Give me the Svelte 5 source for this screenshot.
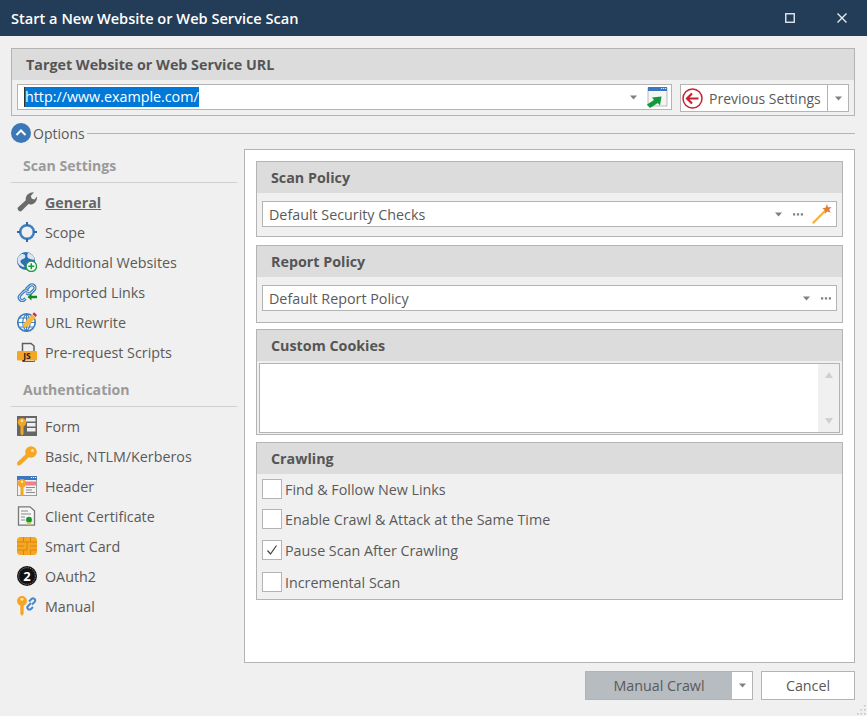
<script>
  const scan = [
    { id: 'wrench', label: 'General', active: true },
    { id: 'scope', label: 'Scope' },
    { id: 'globeplus', label: 'Additional Websites' },
    { id: 'links', label: 'Imported Links' },
    { id: 'rewrite', label: 'URL Rewrite' },
    { id: 'js', label: 'Pre-request Scripts' }
  ];
  const auth = [
    { id: 'form', label: 'Form' },
    { id: 'key', label: 'Basic, NTLM/Kerberos' },
    { id: 'header', label: 'Header' },
    { id: 'cert', label: 'Client Certificate' },
    { id: 'card', label: 'Smart Card' },
    { id: 'oauth', label: 'OAuth2' },
    { id: 'manual', label: 'Manual' }
  ];
  const checks = [
    { label: 'Find & Follow New Links', on: false },
    { label: 'Enable Crawl & Attack at the Same Time', on: false },
    { label: 'Pause Scan After Crawling', on: true },
    { label: 'Incremental Scan', on: false }
  ];
</script>

{#snippet caret()}
  <svg class="caret" width="7" height="5" viewBox="0 0 7 5"><path d="M0 .5h7L3.500 4.500z" fill="#808080"/></svg>
{/snippet}
{#snippet dots()}
  <svg class="dots" width="10" height="3" viewBox="0 0 10 3"><path d="M0 .3h2.200v2.200H0zM3.900 .3h2.200v2.200H3.900zM7.800 .3H10v2.200H7.800z" fill="#808080"/></svg>
{/snippet}
{#snippet smallKey(x, y)}
  <g transform="translate({x} {y})">
    <circle cx="4.500" cy="4.200" r="4.200" fill="#f5a623"/>
    <circle cx="4.500" cy="2.800" r="1.200" fill="#fde9c0"/>
    <path d="M3 7.500h3v8.500L4.500 17.500 3 16z" fill="#f5a623"/>
  </g>
{/snippet}
{#snippet icon(id)}
  <svg class="ico" width="20" height="20" viewBox="0 0 20 20">
    {#if id === 'wrench'}
      <path d="M.9 15.500 8.800 8.200C8.200 4 11.500.2 17 .3L13.800 4l1 2.700 2.700.9L20 4.600c.5 5.200-4 9-8.500 7.500L4.500 19C2.800 20.500-.5 17.300.9 15.500z" fill="#6b6b6b"/>
    {:else if id === 'scope'}
      <circle cx="10" cy="10" r="6.800" fill="none" stroke="#3f7fbe" stroke-width="2.500"/>
      <path d="M10 0v4M10 16v4M0 10h4M16 10h4" stroke="#2f6aa6" stroke-width="2"/>
    {:else if id === 'globeplus'}
      <circle cx="9" cy="9" r="9" fill="#2f70b2"/>
      <path d="M4.500 2c3-.5 4.500 1.500 3.500 3.500S3.500 7 3.500 9.500 7 12 7.500 15C4 15 1 12.500.5 9S2.500 3 4.500 2zM11 1c3.500.5 6 3 6.500 6.500-2 1-4-1-5.500-1S9.500 3 11 1z" fill="#dbe6f1"/>
      <circle cx="14.300" cy="14.300" r="5.200" fill="#fff" stroke="#1d9a3e" stroke-width="1.300"/>
      <path d="M14.300 11.300v6M11.300 14.300h6" stroke="#1d9a3e" stroke-width="1.600"/>
    {:else if id === 'links'}
      <g fill="none" stroke="#3f7fbe" stroke-width="3.200">
        <path d="M9 7.500 12.800 3.700a3 3 0 0 1 4.300 4.200L14 11a3 3 0 0 1-4.200 0"/>
        <path d="M11 9.500a3 3 0 0 0-4.200 0l-4 4.200a3 3 0 0 0 4.200 4.200l1.500-1.500"/>
      </g>
      <g fill="none" stroke="#cfe2f5" stroke-width="1">
        <path d="M9 7.500 12.800 3.700a3 3 0 0 1 4.300 4.200L14 11a3 3 0 0 1-4.200 0"/>
        <path d="M11 9.500a3 3 0 0 0-4.200 0l-4 4.200a3 3 0 0 0 4.200 4.200l1.500-1.500"/>
      </g>
      <path d="M10.500 15 14.500 11.500v2.300H20v2.500h-5.500v2.300z" fill="#128a1e"/>
    {:else if id === 'rewrite'}
      <circle cx="9.500" cy="10.500" r="8.700" fill="#fff" stroke="#3f7fbe" stroke-width="1.700"/>
      <path d="M1 10.500h17M9.500 2v17M3 6h13M3 15h13M9.500 2c-5 4-5 13 0 17M9.500 2c5 4 5 13 0 17" fill="none" stroke="#3f7fbe" stroke-width="1.100"/>
      <path d="M7 11 15 2.500l3.600 3.300-8 8.700-4.300 1.200z" fill="#f6b73c"/>
      <path d="M15.500 2 17 .3l3 2.800-1.400 2z" fill="#d7263d"/>
    {:else if id === 'js'}
      <path d="M5.500 10V1.500h8.500l3 2.500v6" fill="#f0f0f0" stroke="#5e5e5e" stroke-width="1.500"/>
      <rect x="0" y="9" width="20" height="9.500" rx="1" fill="#f5a623"/>
      <path d="M5.500 18.500v1h12v-1" fill="none" stroke="#5e5e5e" stroke-width="1"/>
      <text x="10" y="16.700" text-anchor="middle" class="jstxt">JS</text>
    {:else if id === 'form'}
      <rect x="0" y="0" width="20" height="20" fill="#666"/>
      <path d="M9 2h9.500v3.500H9zM10 7h8.500v3.500H10zM10 12h8.500v3.500H10z" fill="#eee"/>
      {@render smallKey(.5, 2)}
    {:else if id === 'key'}
      <circle cx="14" cy="6" r="5.800" fill="#f5a623"/>
      <circle cx="15.500" cy="4.500" r="1.500" fill="#fbe3b0"/>
      <path d="M9.500 7.500 12.500 10.500 3.500 19 .5 19.800 0 16.500z" fill="#f5a623"/>
    {:else if id === 'header'}
      <rect x=".4" y=".4" width="19.200" height="19.200" fill="#f3f3f3" stroke="#888" stroke-width=".8"/>
      <rect x="0" y="0" width="20" height="4" fill="#3c78c0"/>
      <path d="M14 1.500h1.200M16 1.500h1.200M18 1.500h1.200" stroke="#e5eef7"/>
      <rect x="7" y="5.500" width="12" height="4" fill="#ee7f8e"/>
      <path d="M9 11.500h9M9 14h6M9 16.500h9" stroke="#8c8c8c" stroke-width="1.200"/>
      {@render smallKey(.5, 3)}
    {:else if id === 'cert'}
      <path d="M1.500 .8h11.500l4.500 4v14.400H1.500z" fill="#f6f6f6" stroke="#777" stroke-width="1.300"/>
      <path d="M4 5h7M4 8h10M4 11h4M4 14h4" stroke="#888" stroke-width="1.200"/>
      <path d="M8.500 11.500h7v6h-7z" fill="#dcebd0"/>
      <circle cx="12" cy="13.700" r="2.900" fill="#14982a"/>
      <path d="M10 16.500h4v2h-4z" fill="#e6c75a"/>
    {:else if id === 'card'}
      <rect x="0" y="1" width="20" height="18" rx="3.500" fill="#f5a623"/>
      <path d="M6.500 1v5H0M6.500 19v-5H0M0 10h7M13.500 1v5H20M13.500 19v-5H20M13 10h7M6.500 6H10v8H6.500M13.500 6H10" fill="none" stroke="#d8860f" stroke-width="1"/>
    {:else if id === 'oauth'}
      <circle cx="10" cy="10" r="10" fill="#111"/>
      <circle cx="10" cy="10" r="8.300" fill="none" stroke="#8a8a8a" stroke-width="1" stroke-dasharray="1.200 1"/>
      <text x="10" y="14.700" text-anchor="middle" class="otxt">2</text>
    {:else if id === 'manual'}
      <circle cx="5" cy="5" r="5" fill="#f5a623"/>
      <circle cx="5" cy="3.300" r="1.400" fill="#fde9c0"/>
      <path d="M3.300 9h3.400v8.500L5 20 3.300 18z" fill="#f5a623"/>
      <g fill="none" stroke="#4a86c5" stroke-width="2">
        <path d="M12 5.500 14.500 3a2.100 2.100 0 0 1 3 3L15 8.500"/>
        <path d="M14 7 11 10a2.100 2.100 0 0 0 3 3L16 11"/>
      </g>
    {/if}
  </svg>
{/snippet}
{#snippet navItem(it)}
  <li class="item" class:active={it.active}>
    {@render icon(it.id)}
    <span>{it.label}</span>
  </li>
{/snippet}

<div class="win">
  <header class="title">
    <h1>Start a New Website or Web Service Scan</h1>
    <div class="wbtns">
      <svg width="10" height="10" viewBox="0 0 10 10"><rect x=".75" y=".75" width="8.500" height="8.500" fill="none" stroke="#d6dde4" stroke-width="1.500"/></svg>
      <svg width="10" height="10" viewBox="0 0 10 10"><path d="M.5.500l9 9M9.500.500l-9 9" stroke="#e8edf2" stroke-width="1.400"/></svg>
    </div>
  </header>

  <section class="target">
    <h2 class="boxhead">Target Website or Web Service URL</h2>
    <div class="urlrow">
      <div class="urlbox">
        <span class="sel">http://www.example.com/</span>
        {@render caret()}
        <svg class="open" width="21" height="21" viewBox="0 0 21 21">
          <rect x="1" y="1" width="19" height="18" fill="#f5f5f5" stroke="#aaa" stroke-width=".8"/>
          <rect x="1" y="0" width="19" height="4" fill="#3c78c0"/>
          <path d="M14 1.500h1.200M16 1.500h1.200M18 1.500h1.200" stroke="#dfe9f3"/>
          <path d="M0 17.500 7 13 5 10.500 14.500 9.500 13 18.500 10.800 16 3 21z" fill="#119a3a"/>
        </svg>
      </div>
      <div class="prev">
        <div class="prevmain">
          <svg width="21" height="21" viewBox="0 0 21 21">
            <circle cx="10.500" cy="10.500" r="9.500" fill="#fff" stroke="#c8202f" stroke-width="1.500"/>
            <path d="M5 10.500h11.500M10 5.500 5 10.500l5 5" fill="none" stroke="#c8202f" stroke-width="2.200"/>
          </svg>
          <span>Previous Settings</span>
        </div>
        <div class="prevdrop">{@render caret()}</div>
      </div>
    </div>
  </section>

  <div class="optline">
    <svg width="20" height="20" viewBox="0 0 20 20">
      <circle cx="10" cy="10" r="10" fill="#3b78b8"/>
      <path d="M5.500 12 10 7.500l4.500 4.500" fill="none" stroke="#fff" stroke-width="2"/>
    </svg>
    <span>Options</span>
    <i></i>
  </div>

  <div class="body">
    <nav class="side">
      <h3>Scan Settings</h3>
      <ul>{#each scan as it}{@render navItem(it)}{/each}</ul>
      <h3 class="second">Authentication</h3>
      <ul>{#each auth as it}{@render navItem(it)}{/each}</ul>
    </nav>

    <main class="panel">
      <section class="group g1">
        <h2 class="boxhead">Scan Policy</h2>
        <div class="combo">
          <span>Default Security Checks</span>
          {@render caret()}
          {@render dots()}
          <svg class="wand" width="20" height="20" viewBox="0 0 20 20">
            <path d="M.7 19.300 14 6" stroke="#f3b23a" stroke-width="2.200"/>
            <path d="M15 0l1 3.300 3.500-.3-2.300 2.600 1.500 3.200-3.300-1.300-2.600 2.200.3-3.400-2.900-1.800 3.300-.8z" fill="#e9773c"/>
          </svg>
        </div>
      </section>
      <section class="group g2">
        <h2 class="boxhead">Report Policy</h2>
        <div class="combo">
          <span>Default Report Policy</span>
          {@render caret()}
          {@render dots()}
        </div>
      </section>
      <section class="group g3">
        <h2 class="boxhead">Custom Cookies</h2>
        <div class="area">
          <div class="sb">
            <svg width="8" height="6" viewBox="0 0 8 6"><path d="M4 0 8 6H0z" fill="#d0d0d0"/></svg>
            <svg width="8" height="6" viewBox="0 0 8 6"><path d="M4 6 8 0H0z" fill="#d0d0d0"/></svg>
          </div>
        </div>
      </section>
      <section class="group g4">
        <h2 class="boxhead">Crawling</h2>
        <div class="checks">
          {#each checks as c, i}
            <label class="chk c{i}">
              <span class="box">
                {#if c.on}<svg width="12" height="12" viewBox="0 0 12 12"><path d="M1.500 6.500 4.500 10 10.500 1.500" fill="none" stroke="#444" stroke-width="1.200"/></svg>{/if}
              </span>
              <span>{c.label}</span>
            </label>
          {/each}
        </div>
      </section>
    </main>
  </div>

  <footer class="foot">
    <div class="split">
      <div class="primary">Manual Crawl</div>
      <div class="drop">{@render caret()}</div>
    </div>
    <div class="cancel">Cancel</div>
  </footer>
  <svg class="grip" width="11" height="12" viewBox="0 0 11 12"><path d="M8 1h1.500v1.500H8zM4.500 5H6v1.500H4.500zM8 5h1.500v1.500H8zM1 9h1.500v1.500H1zM4.500 9H6v1.500H4.500zM8 9h1.500v1.500H8z" fill="#c4c4c4"/></svg>
</div>

<style>
  :global(body) { margin: 0; background: #f0f0f0; }
  * { box-sizing: border-box; }
  h1, h2, h3, ul { margin: 0; padding: 0; }
  ul { list-style: none; }
  .win {
    position: relative;
    width: 867px;
    height: 716px;
    background: #f0f0f0;
    color: #5a5a5a;
    font-family: "Open Sans", "Noto Sans", sans-serif;
    font-size: 14.3px;
    overflow: hidden;
  }
  .title {
    height: 36px;
    background: #233c57;
    display: flex;
    align-items: center;
    justify-content: space-between;
    padding: 0 20px 0 11px;
  }
  .title h1 { font-size: 14.6px; font-weight: 600; color: #fff; }
  .wbtns { display: flex; align-items: center; gap: 42px; }

  .target {
    margin: 12px 12px 0 11px;
    height: 68px;
    border: 1px solid #b4b4b4;
  }
  .boxhead {
    height: 31px;
    line-height: 31px;
    background: #dcdcdc;
    font-size: 14.3px;
    font-weight: 700;
    color: #555;
    padding-left: 14px;
  }
  .urlrow { display: flex; padding: 4px 5px 0 5px; gap: 8px; }
  .urlbox {
    width: 655px;
    height: 26px;
    border: 1px solid #b4b4b4;
    background: #fff;
    display: flex;
    align-items: center;
    padding: 0 3px 0 6px;
  }
  .sel {
    background: #0078d7;
    color: #fff;
    border-left: 1px solid #333;
    line-height: 20px;
    margin-right: auto;
  }
  .urlbox .caret { margin-right: 10px; }
  .prev {
    flex: 1;
    height: 28px;
    border: 1px solid #b4b4b4;
    background: #fff;
    display: flex;
  }
  .prevmain {
    flex: 1;
    display: flex;
    align-items: center;
    gap: 6px;
    padding-left: 1px;
    white-space: nowrap;
    font-size: 14px;
  }
  .prevdrop { width: 21px; border-left: 1px solid #b4b4b4; display: flex; align-items: center; justify-content: center; }

  .optline { display: flex; align-items: center; margin: 7px 12px 0 11px; height: 20px; }
  .optline span { margin: 0 2px; font-size: 14px; }
  .optline i { flex: 1; height: 1px; background: #b4b4b4; }

  .body { display: flex; margin: 6px 12px 0 11px; }
  .side { width: 226px; margin-right: 7px; padding-top: 6px; }
  .side h3 {
    font-size: 14.1px;
    font-weight: 700;
    color: #9a9a9a;
    padding-left: 12px;
    height: 28px;
    line-height: 22px;
    border-bottom: 1px solid #d0d0d0;
  }
  .side h3.second { margin-top: 12px; }
  .side ul { padding-top: 4px; }
  .item { height: 30px; display: flex; align-items: center; gap: 8px; padding-left: 6px; }
  .item.active span { font-weight: 700; text-decoration: underline; color: #666; }
  .jstxt { font: 700 8.5px "Open Sans", sans-serif; fill: #222; }
  .otxt { font: 700 13px "Open Sans", sans-serif; fill: #fff; }

  .panel {
    flex: 1;
    height: 514px;
    background: #fff;
    border: 1px solid #b4b4b4;
    padding: 11px;
  }
  .group { background: #f0f0f0; border: 1px solid #b4b4b4; }
  .g1 { height: 76px; }
  .g2 { height: 78px; margin-top: 8px; }
  .g3 { height: 106px; margin-top: 6px; }
  .g4 { height: 158px; margin-top: 7px; }
  .combo {
    margin: 8px 5px 0;
    height: 26px;
    border: 1px solid #b4b4b4;
    background: #fff;
    display: flex;
    align-items: center;
    padding: 0 5px 0 6px;
  }
  .g1 .combo { padding-right: 4px; }
  .combo span { margin-right: auto; }
  .combo .dots { margin-left: 11px; }
  .combo .wand { margin-left: 9px; }
  .area {
    margin: 2px 2px 0;
    height: 70px;
    border: 1px solid #b4b4b4;
    background: #fff;
    display: flex;
    justify-content: flex-end;
  }
  .sb {
    width: 21px;
    background: #f0f0f0;
    display: flex;
    flex-direction: column;
    justify-content: space-between;
    align-items: center;
    padding: 8px 0;
  }
  .checks { padding: 5px 5px 0; }
  .chk { display: flex; align-items: center; gap: 3px; height: 20px; }
  .c1 { margin-top: 10px; }
  .c2 { margin-top: 11px; }
  .c3 { margin-top: 12px; }
  .box {
    width: 20px;
    height: 20px;
    border: 1px solid #b4b4b4;
    background: #fff;
    display: flex;
    align-items: center;
    justify-content: center;
  }

  .foot { display: flex; justify-content: flex-end; gap: 8px; margin: 8px 12px 0 0; }
  .split { display: flex; height: 29px; width: 168px; border: 1px solid #b4b4b4; background: #fff; }
  .primary { flex: 1; background: #b7bcc1; display: flex; align-items: center; justify-content: center; }
  .drop { width: 20px; display: flex; align-items: center; justify-content: center; }
  .cancel {
    width: 94px;
    height: 29px;
    border: 1px solid #b4b4b4;
    background: #fff;
    display: flex;
    align-items: center;
    justify-content: center;
  }
  .grip { position: absolute; right: 0; bottom: 0; }
</style>
